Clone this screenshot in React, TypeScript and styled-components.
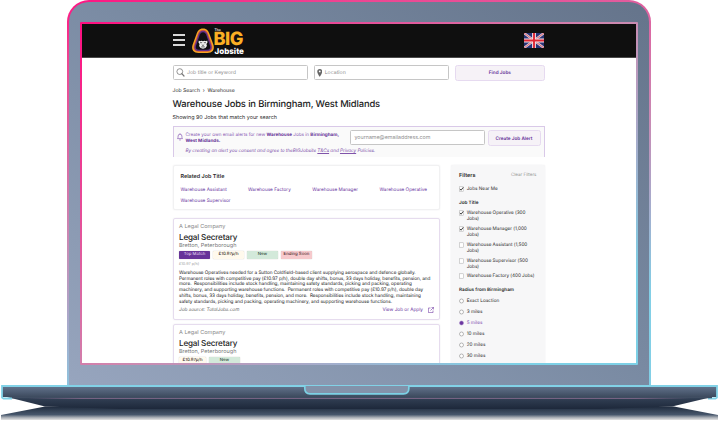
import React from "react";
import styled, { createGlobalStyle, css } from "styled-components";

const Global = createGlobalStyle`
  * { box-sizing: border-box; }
  html, body { margin: 0; padding: 0; background: #fff; overflow: hidden; }
  body { font-family: Inter, "Liberation Sans", sans-serif; text-rendering: geometricPrecision; }
`;

const Stage = styled.main`
  width: 719px;
  height: 421px;
  display: flex;
  flex-direction: column;
  align-items: flex-start;
  overflow: hidden;
`;

const Lid = styled.div`
  width: 584px;
  height: 385px;
  flex: none;
  margin-left: 67px;
  padding: 20px 11px 0;
  border: 2px solid transparent;
  border-bottom: 0;
  border-radius: 22px 22px 0 0;
  background:
    linear-gradient(215deg, #65748b 0%, #7889a1 45%, #97a5be 100%) padding-box,
    linear-gradient(168deg, #ff1482 0%, #ee4592 12%, #c88ab4 48%, #82cfe6 82%) border-box;
`;

const Screen = styled.div`
  width: 558px;
  height: 343px;
  border: 2px solid transparent;
  border-radius: 1px;
  background:
    linear-gradient(#fff, #fff) padding-box,
    linear-gradient(145deg, #ff0f80 0%, #cf86ae 50%, #7dd0e6 88%) border-box;
`;

const Viewport = styled.div`
  height: 339px;
  overflow: hidden;
  color: #2c2c2c;
`;

const Header = styled.header`
  height: 34px;
  padding: 0 92.5px 0 91px;
  display: flex;
  align-items: center;
  background: #0f0f0f;
  border-bottom: 1px solid #4a4a4a;
`;

const Burger = styled.div`
  width: 12px;
  display: grid;
  gap: 3px;
  margin-bottom: 1px;
  i { height: 2px; background: #d8d8d8; }
`;

const Brand = styled.div`
  display: flex;
  align-items: flex-start;
  margin-left: 5.5px;
  height: 26px;
  flex: 1;
`;

const BrandWords = styled.div`
  display: flex;
  flex-direction: column;
  color: #fff;
  white-space: nowrap;
  span { font-size: 3.4px; line-height: 4px; font-weight: 600; }
  strong { font-size: 18.2px; line-height: 15.5px; font-weight: 800; color: #fbb024; letter-spacing: -0.5px; margin-left: -1px; }
  b { font-size: 8px; line-height: 8px; margin-top: -0.5px; font-weight: 800; }
`;

const Content = styled.div`
  width: 373px;
  margin: 0 auto 0 90.5px;
  display: flex;
  flex-direction: column;
`;

const SearchBar = styled.div`
  display: flex;
  align-items: center;
  gap: 6.2px;
  height: 16px;
  margin: 6.5px 0 5.5px;
`;

const Field = styled.div<{ $indent?: number; $size?: number }>`
  width: 135px;
  height: 15px;
  flex: none;
  display: flex;
  align-items: center;
  gap: 2.5px;
  padding: 1px 0 0 ${(p) => p.$indent ?? 2}px;
  border: 1px solid #c6c6c6;
  border-radius: 1.5px;
  background: #fff;
  color: #8e8e8e;
  font-size: ${(p) => p.$size ?? 5.2}px;
  line-height: 8px;
  svg { flex: none; margin-top: -1px; }
`;

const Action = styled.button<{ $width: number }>`
  width: ${(p) => p.$width}px;
  height: 16px;
  flex: none;
  padding: 1px 0 0;
  border: 1px solid #e6daf0;
  border-radius: 2.5px;
  background: #f6f2f7;
  color: #673399;
  font: 600 4.7px Inter, sans-serif;
  text-rendering: geometricPrecision;
  white-space: nowrap;
`;

const Line = styled.div<{ $size: number; $height: number; $color?: string; $weight?: number; $track?: number; $italic?: boolean }>`
  height: ${(p) => p.$height}px;
  line-height: ${(p) => p.$height}px;
  font-size: ${(p) => p.$size}px;
  color: ${(p) => p.$color ?? "#2c2c2c"};
  font-weight: ${(p) => p.$weight ?? 400};
  letter-spacing: ${(p) => p.$track ?? 0}px;
  font-style: ${(p) => (p.$italic ? "italic" : "normal")};
  white-space: pre;
`;

const Alert = styled.section`
  width: 372px;
  height: 31px;
  margin-top: 3.5px;
  border: 1px solid #d9c9e8;
  border-bottom: 0;
  background: #fafafa;
  display: flex;
  padding: 3px 0 0 3.5px;
`;

const AlertIcon = styled.div`
  width: 6px;
  height: 8px;
  flex: none;
  margin-top: 3px;
  svg { display: block; }
`;

const AlertCopy = styled.div`
  width: 163px;
  margin-left: 2.5px;
  padding-top: 2.5px;
  u { text-decoration-thickness: 0.5px; text-underline-offset: 1px; }
  b { font-weight: 700; color: #653196; }
`;

const AlertForm = styled.div`
  display: flex;
  gap: 2.5px;
  margin-left: 1.5px;
`;

const Columns = styled.div`
  display: flex;
  gap: 11px;
  margin-top: 8px;
`;

const Results = styled.div`
  width: 267px;
  flex: none;
  display: flex;
  flex-direction: column;
`;

const panel = css`
  border-radius: 2px;
  box-shadow: 0 0 1.5px rgba(80, 60, 100, 0.12);
`;

const Related = styled.section`
  ${panel}
  height: 45px;
  padding: 6.5px 7px;
  border: 1px solid #f1f1f2;
`;

const LinkGrid = styled.nav`
  display: grid;
  grid-template-columns: 67.5px 64.3px 67.2px 50px;
  margin-top: 4px;
  row-gap: 3.5px;
`;

const Card = styled.article<{ $top: number }>`
  ${panel}
  height: 102px;
  margin-top: ${(p) => p.$top}px;
  padding: 4px 5.5px 0;
  border: 1px solid #e6dcee;
`;

const Badges = styled.div`
  display: flex;
  gap: 3px;
  height: 8px;
  margin: 1.2px 0 2.4px;
`;

const tones = {
  match: ["#673399", "#e8dcf5"],
  pay: ["#fff9ed", "#38322a"],
  fresh: ["#d3e9da", "#2c4636"],
  ending: ["#f6c9cc", "#512e31"],
};

const Badge = styled.span<{ $tone: keyof typeof tones; $width?: number }>`
  width: ${(p) => p.$width ?? 31}px;
  height: 8px;
  border-radius: 0.8px;
  background: ${(p) => tones[p.$tone][0]};
  color: ${(p) => tones[p.$tone][1]};
  box-shadow: 0 0 1px rgba(80, 60, 40, 0.45);
  font-size: 4.3px;
  font-weight: ${(p) => (p.$tone === "match" ? 400 : 500)};
  line-height: 8px;
  text-align: center;
  white-space: nowrap;
`;

const CardFoot = styled.footer`
  display: flex;
  align-items: center;
  justify-content: space-between;
  margin-top: -0.4px;
`;

const ApplyLink = styled.div`
  display: flex;
  align-items: center;
  gap: 4.5px;
  margin-right: -0.5px;
`;

const Sidebar = styled.aside`
  ${panel}
  width: 94.5px;
  height: 230px;
  flex: none;
  padding: 7px 8.5px;
  background: #f7f7f8;
`;

const SideHead = styled.div`
  display: flex;
  justify-content: space-between;
  margin-bottom: 6.2px;
`;

const SideTitle = styled(Line)<{ $after: number }>`
  margin-bottom: ${(p) => p.$after}px;
`;

const Option = styled.label<{ $gap: number }>`
  display: flex;
  gap: 2.7px;
  margin-bottom: ${(p) => p.$gap}px;
  svg { flex: none; }
`;

const Summary = styled.div`
  padding-top: 3.5px;
`;

const Base = styled.svg`
  display: block;
  flex: none;
`;

function SearchIcon() {
  return (
    <svg width="9" height="9" viewBox="0 0 9 9" fill="none" stroke="#777">
      <circle cx="3.8" cy="3.6" r="2.9" strokeWidth="0.8" />
      <path d="M5.8 5.6 8 8" strokeWidth="1.2" strokeLinecap="round" />
    </svg>
  );
}

function PinIcon() {
  return (
    <svg width="5.5" height="8" viewBox="0 0 5 8">
      <path d="M2.5 0A2.5 2.5 0 0 0 0 2.5C0 4.5 2.5 7.8 2.5 7.8S5 4.5 5 2.5A2.5 2.5 0 0 0 2.5 0Z" fill="#666" />
      <circle cx="2.5" cy="2.4" r="0.9" fill="#fff" />
    </svg>
  );
}

function BellIcon() {
  return (
    <svg width="6" height="8" viewBox="0 0 6 8" fill="none" stroke="#8a5bb5" strokeWidth="0.7">
      <path d="M0.5 5.6C1.1 5 1.1 4 1.1 3.1a1.9 1.9 0 0 1 3.8 0c0 .9 0 1.9.6 2.5ZM2.2 6.8q.8.7 1.6 0M3 .4v.8" />
    </svg>
  );
}

function ShareIcon() {
  return (
    <svg width="6" height="6" viewBox="0 0 6 6" fill="none" stroke="#7945a8" strokeWidth="0.65">
      <path d="M2.5 1H.4v4.6H5V3.5M3.5.4h2.1v2.1M5.5.5 2.5 3.5" />
    </svg>
  );
}

function GorillaLogo() {
  return (
    <svg width="24" height="26" viewBox="0 0 24 26">
      <path d="M12 .5C8 .5 6.500 3 5.500 6L1.500 17C0 22 3 25 7.500 25h9c4.500 0 7.500-3 6-8l-4-11C17.500 3 16 .5 12 .5Z" fill="#f6a623" />
      <path d="M12 2.100c-3.300 0-4.500 2-5.400 4.600L2.900 17.300c-1.200 4 1 6.400 4.800 6.400h8.600c3.800 0 6-2.400 4.800-6.400L17.400 6.700c-.9-2.600-2.100-4.600-5.400-4.600Z" fill="#d85a3a" />
      <path d="M12 2.800c-2.800 0-3.800 1.800-4.600 4L3.700 17.500c-1.100 3.500.9 5.500 4.300 5.500h8c3.400 0 5.400-2 4.300-5.500L16.600 6.800c-.8-2.200-1.800-4-4.600-4Z" fill="#633087" />
      <path d="M12 4.200c-2 0-2.900 1.500-3.500 3.200L5 17.800c-.8 2.700.4 4 2.900 4h8.200c2.500 0 3.700-1.300 2.900-4L15.500 7.400C14.900 5.700 14 4.200 12 4.200Z" fill="#111014" />
      <path d="M7.800 12.500l1.300.7q1.500-.7 2.900.1 1.400-.8 2.900-.1l1.300-.7.3 2-1.100 1.400.5 2.200q-1.100 2.600-3.900 2.600t-3.900-2.600l.5-2.200-1.100-1.400Z" fill="#f3f3f3" />
      <path d="M9 14.700h2.200M12.800 14.700H15M10.800 16.800l1.200.7 1.200-.7M10.200 18.900h3.600" stroke="#242424" strokeWidth="0.700" fill="none" />
    </svg>
  );
}

function UnionFlag() {
  return (
    <svg width="20" height="15" viewBox="0 0 20 15">
      <path d="M0 0h20v15H0Z" fill="#283478" />
      <path d="m0 0 20 15M20 0 0 15" stroke="#e2cbd4" strokeWidth="2.3" />
      <path d="m0 0 20 15M20 0 0 15" stroke="#d75865" strokeWidth="0.9" />
      <path d="M10 0v15M0 7.500h20" stroke="#f4dfe4" strokeWidth="3.800" />
      <path d="M10 0v15M0 7.500h20" stroke="#df2634" strokeWidth="1.900" />
    </svg>
  );
}

function Mark({ kind, on }: { kind: "check" | "radio"; on?: boolean }) {
  return (
    <svg width="5" height="6" viewBox="0 -0.5 5 6" fill="none">
      {kind === "check" ? (
        <rect x="0.3" y="0.3" width="4.400" height="4.400" fill="#fff" stroke="#aaa" strokeWidth="0.500" />
      ) : (
        <circle cx="2.500" cy="2.500" r="2" fill={on ? "#6a35a0" : "#fff"} stroke={on ? "#9c78c0" : "#777"} strokeWidth="0.500" />
      )}
      {kind === "check" && on && <path d="m.9 2.400 1.200 1.300L4.300.8" stroke="#222" strokeWidth="0.850" />}
    </svg>
  );
}

const related = ["Warehouse Assistant", "Warehouse Factory", "Warehouse Manager", "Warehouse Operative", "Warehouse Supervisor"];

const jobTitles = [
  { lines: ["Warehouse Operative (300", "Jobs)"], on: true, gap: 4.1 },
  { lines: ["Warehouse Manager (1,000", "Jobs)"], on: true, gap: 4.1 },
  { lines: ["Warehouse Assistant (1,500", "Jobs)"], gap: 4.1 },
  { lines: ["Warehouse Supervisor (500", "Jobs)"], gap: 3.4 },
  { lines: ["Warehouse Factory (400 Jobs)"], gap: 7.3 },
];

const radii = ["Exact Loaction", "3 miles", "5 miles", "10 miles", "20 miles", "30 miles"];

const description = [
  "Warehouse Operatives needed for a Sutton Coldfield-based client supplying aerospace and defence globally.",
  "Permanent roles with competitive pay (£10.97 p/h), double day shifts, bonus, 33 days holiday, benefits, pension, and",
  "more.  Responsibilities include stock handling, maintaining safety standards, picking and packing, operating",
  "machinery, and supporting warehouse functions.  Permanent roles with competitive pay (£10.97 p/h), double day",
  "shifts, bonus, 33 days holiday, benefits, pension, and more.  Responsibilities include stock handling, maintaining",
  "safety standards, picking and packing, operating machinery, and supporting warehouse functions.",
];

function JobHeading() {
  return (
    <>
      <Line $size={5.55} $height={9} $color="#888">A Legal Company</Line>
      <Line $size={8.1} $height={10} $color="#222" $weight={500} $track={-0.17}>Legal Secretary</Line>
      <Line $size={5.5} $height={8} $color="#777">Bretton, Peterborough</Line>
    </>
  );
}

function LaptopBase() {
  return (
    <Base width="719" height="36" viewBox="0 0 719 36">
      <defs>
        <linearGradient id="deck" x2="0" y2="1">
          <stop stopColor="#61728b" />
          <stop offset="1" stopColor="#3d4a5e" />
        </linearGradient>
        <linearGradient id="belly" x2="0" y2="1">
          <stop stopColor="#344257" />
          <stop offset="1" stopColor="#1d283a" />
        </linearGradient>
        <linearGradient id="shade" x2="0" y2="1">
          <stop stopColor="#1f2b3d" />
          <stop offset="0.600" stopColor="#46566b" />
          <stop offset="0.800" stopColor="#a2a8b0" />
          <stop offset="1" stopColor="#e4e4e4" />
        </linearGradient>
        <linearGradient id="seam">
          <stop stopColor="#8c6d91" stopOpacity="0" />
          <stop offset="0.080" stopColor="#8c6d91" />
          <stop offset="0.920" stopColor="#8c6d91" />
          <stop offset="1" stopColor="#8c6d91" stopOpacity="0" />
        </linearGradient>
      </defs>
      <path d="M45 21.500H674L718 30v5H1v-5Z" fill="url(#shade)" />
      <path d="M7 12H712L672 21.500 600 24H120L45 21.500Z" fill="url(#belly)" />
      <path d="M2 1.500H717V12H2Z" fill="url(#deck)" />
      <path d="M12 13.500H3.500L2 12.500V1H717v11.500l-1.500 1H708" fill="none" stroke="#82d2e7" strokeWidth="1.800" />
      <path d="M12 12h700v1.300H12Z" fill="#3f4d61" />
      <path d="M28 13.200H690v.8H28Z" fill="url(#seam)" />
      <path d="M304.800 1v2.500Q304.800 8.800 310 8.800h93.500q5.300 0 5.300-5.300V1" fill="#8392aa" />
      <path d="M304.800 1v2.500Q304.800 8.800 310 8.800h93.500q5.300 0 5.300-5.300V1" fill="none" stroke="#7cd1e5" strokeWidth="1.700" />
    </Base>
  );
}

export default function App() {
  return (
    <>
      <Global />
      <Stage>
        <Lid>
          <Screen>
            <Viewport>
              <Header>
                <Burger><i /><i /><i /></Burger>
                <Brand>
                  <GorillaLogo />
                  <BrandWords><span>The</span><strong>BIG</strong><b>Jobsite</b></BrandWords>
                </Brand>
                <UnionFlag />
              </Header>
              <Content>
                <SearchBar>
                  <Field><SearchIcon />Job title or Keyword</Field>
                  <Field><PinIcon />Location</Field>
                  <Action $width={90}>Find Jobs</Action>
                </SearchBar>
                <Line $size={5.1} $height={10}>{"Job Search  ›  Warehouse"}</Line>
                <Line $size={9.4} $height={17.5} $color="#222" $weight={450} $track={-0.13}>Warehouse Jobs in Birmingham, West Midlands</Line>
                <Line $size={5.4} $height={9}>Showing 90 Jobs that match your search</Line>
                <Alert>
                  <AlertIcon><BellIcon /></AlertIcon>
                  <AlertCopy>
                    <Line $size={4.6} $height={6} $color="#8a60b4">Create your own email alerts for new <b>Warehouse</b> Jobs in <b>Birmingham,</b></Line>
                    <Line $size={4.6} $height={6} $color="#8a60b4"><b>West Midlands.</b></Line>
                    <Line $size={4.7} $height={12} $color="#8053aa" $italic $track={-0.06}>By creating an alert you consent and agree to theBIGJobsite <u>T&amp;Cs</u> and <u>Privacy</u> Policies.</Line>
                  </AlertCopy>
                  <AlertForm>
                    <Field $indent={3.5} $size={5.3}>yourname@emailaddress.com</Field>
                    <Action $width={53}>Create Job Alert</Action>
                  </AlertForm>
                </Alert>
                <Columns>
                  <Results>
                    <Related>
                      <Line $size={5.45} $height={9} $weight={600}>Related Job Title</Line>
                      <LinkGrid>
                        {related.map((name) => <Line key={name} $size={4.68} $height={8} $color="#6733a0">{name}</Line>)}
                      </LinkGrid>
                    </Related>
                    <Card $top={7.5}>
                      <JobHeading />
                      <Badges>
                        <Badge $tone="match">Top Match</Badge>
                        <Badge $tone="pay">£10.97p/h</Badge>
                        <Badge $tone="fresh">New</Badge>
                        <Badge $tone="ending">Ending Soon</Badge>
                      </Badges>
                      <Line $size={3.8} $height={6} $color="#999">£10.97 p/h)</Line>
                      <Summary>
                        {description.map((text) => <Line key={text} $size={4.7} $height={5.95} $track={-0.05} $color="#222">{text}</Line>)}
                      </Summary>
                      <CardFoot>
                        <Line $size={4.75} $height={8} $color="#666" $italic $track={-0.03}>Job source: TotalJobs.com</Line>
                        <ApplyLink><Line $size={4.7} $height={8} $color="#6733a0">View Job or Apply</Line><ShareIcon /></ApplyLink>
                      </CardFoot>
                    </Card>
                    <Card $top={4.5}>
                      <JobHeading />
                      <Badges><Badge $tone="pay" $width={27}>£10.97p/h</Badge><Badge $tone="fresh">New</Badge></Badges>
                    </Card>
                  </Results>
                  <Sidebar>
                    <SideHead>
                      <Line $size={5.5} $height={8} $weight={600}>Filters</Line>
                      <Line $size={4.5} $height={8} $color="#999">Clear Filters</Line>
                    </SideHead>
                    <Option $gap={7.5}><Mark kind="check" on /><Line $size={4.7} $height={6}>Jobs Near Me</Line></Option>
                    <SideTitle $size={4.65} $height={7} $weight={600} $after={3}>Job Title</SideTitle>
                    {jobTitles.map(({ lines, on, gap }) => (
                      <Option key={lines[0]} $gap={gap}>
                        <Mark kind="check" on={on} />
                        <div>{lines.map((text) => <Line key={text} $size={4.7} $height={6} $track={-0.04}>{text}</Line>)}</div>
                      </Option>
                    ))}
                    <SideTitle $size={4.65} $height={7} $weight={600} $after={4}>Radius from Birmingham</SideTitle>
                    {radii.map((text) => (
                      <Option key={text} $gap={5.05}>
                        <Mark kind="radio" on={text === "5 miles"} />
                        <Line $size={4.7} $height={6} $color={text === "5 miles" ? "#8150b0" : "#2c2c2c"}>{text}</Line>
                      </Option>
                    ))}
                  </Sidebar>
                </Columns>
              </Content>
            </Viewport>
          </Screen>
        </Lid>
        <LaptopBase />
      </Stage>
    </>
  );
}
